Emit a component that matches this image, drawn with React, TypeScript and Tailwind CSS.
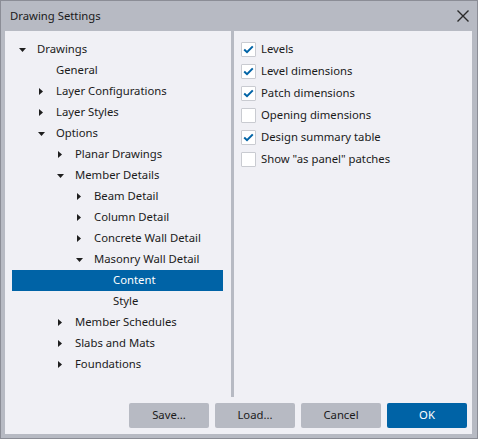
type Node = { label: string; level: number; arrow?: "right" | "down"; selected?: boolean };

const tree: Node[] = [
  { label: "Drawings", level: 0, arrow: "down" },
  { label: "General", level: 1 },
  { label: "Layer Configurations", level: 1, arrow: "right" },
  { label: "Layer Styles", level: 1, arrow: "right" },
  { label: "Options", level: 1, arrow: "down" },
  { label: "Planar Drawings", level: 2, arrow: "right" },
  { label: "Member Details", level: 2, arrow: "down" },
  { label: "Beam Detail", level: 3, arrow: "right" },
  { label: "Column Detail", level: 3, arrow: "right" },
  { label: "Concrete Wall Detail", level: 3, arrow: "right" },
  { label: "Masonry Wall Detail", level: 3, arrow: "down" },
  { label: "Content", level: 4, selected: true },
  { label: "Style", level: 4 },
  { label: "Member Schedules", level: 2, arrow: "right" },
  { label: "Slabs and Mats", level: 2, arrow: "right" },
  { label: "Foundations", level: 2, arrow: "right" },
];

const options = [
  { label: "Levels", checked: true },
  { label: "Level dimensions", checked: true },
  { label: "Patch dimensions", checked: true },
  { label: "Opening dimensions", checked: false },
  { label: "Design summary table", checked: true },
  { label: 'Show "as panel" patches', checked: false },
];

const indent = ["w-[0px]", "w-[19px]", "w-[38px]", "w-[57px]", "w-[76px]"];

function Arrow({ dir }: { dir?: "right" | "down" }) {
  return (
    <span className="flex h-full w-[20px] shrink-0 items-center justify-center">
      {dir === "right" && (
        <svg width="4" height="7" viewBox="0 0 4 7">
          <path d="M0 0 L4 3.5 L0 7 Z" fill="#1e1e1e" />
        </svg>
      )}
      {dir === "down" && (
        <svg width="7" height="4" viewBox="0 0 7 4">
          <path d="M0 0 L7 0 L3.5 4 Z" fill="#1e1e1e" />
        </svg>
      )}
    </span>
  );
}

function Checkbox({ checked }: { checked: boolean }) {
  return (
    <span className="flex h-[15px] w-[15px] shrink-0 items-center justify-center rounded-[1px] border border-[#c9cbd1] bg-white">
      {checked && (
        <svg width="11" height="9" viewBox="0 0 11 9">
          <path d="M1.2 4.6 L4 7.2 L9.8 1.4" fill="none" stroke="#0063a6" strokeWidth="2" />
        </svg>
      )}
    </span>
  );
}

export default function App() {
  return (
    <div
      className="flex h-[439px] w-[478px] flex-col border border-[#8b8d96] bg-[#b7bac3] text-[11.3px] text-[#1b1b1b]"
      style={{ fontFamily: '"Segoe UI", "Noto Sans", sans-serif' }}
    >
      <div className="flex h-[30px] shrink-0 items-center justify-between pl-[9px] pr-[8px]">
        <span>Drawing Settings</span>
        <svg width="12" height="12" viewBox="0 0 12 12">
          <path d="M0.5 0.5 L11.5 11.5 M11.5 0.5 L0.5 11.5" stroke="#2a2a2a" strokeWidth="1.4" />
        </svg>
      </div>
      <div className="ml-[4px] mr-[5px] mb-[4px] flex flex-1 flex-col bg-[#f0f0f5]">
        <div className="flex h-[366px]">
          <div className="w-[226px] pt-[8px] pl-[7px] pr-[8px]">
            {tree.map((n) => (
              <div
                key={n.label}
                className={`flex h-[21px] items-center ${n.selected ? "bg-[#0063a6] text-white" : ""}`}
              >
                <span className={`shrink-0 ${indent[n.level]}`} />
                <Arrow dir={n.arrow} />
                <span className="whitespace-nowrap pl-[5px]">{n.label}</span>
              </div>
            ))}
          </div>
          <div className="w-[3px] bg-[#b7bac3]" />
          <div className="flex-1 pt-[7px] pl-[7px]">
            {options.map((o) => (
              <div key={o.label} className="flex h-[22px] items-center gap-[5px]">
                <Checkbox checked={o.checked} />
                <span className="whitespace-nowrap">{o.label}</span>
              </div>
            ))}
          </div>
        </div>
        <div className="flex justify-end gap-[6px] pt-[6px] pr-[5px]">
          {["Save...", "Load...", "Cancel"].map((b) => (
            <button key={b} className="h-[25px] w-[80px] rounded-[2px] bg-[#b7bac3] text-[#1b1b1b]">
              {b}
            </button>
          ))}
          <button className="h-[25px] w-[80px] rounded-[2px] bg-[#0063a6] text-white">OK</button>
        </div>
      </div>
    </div>
  );
}
